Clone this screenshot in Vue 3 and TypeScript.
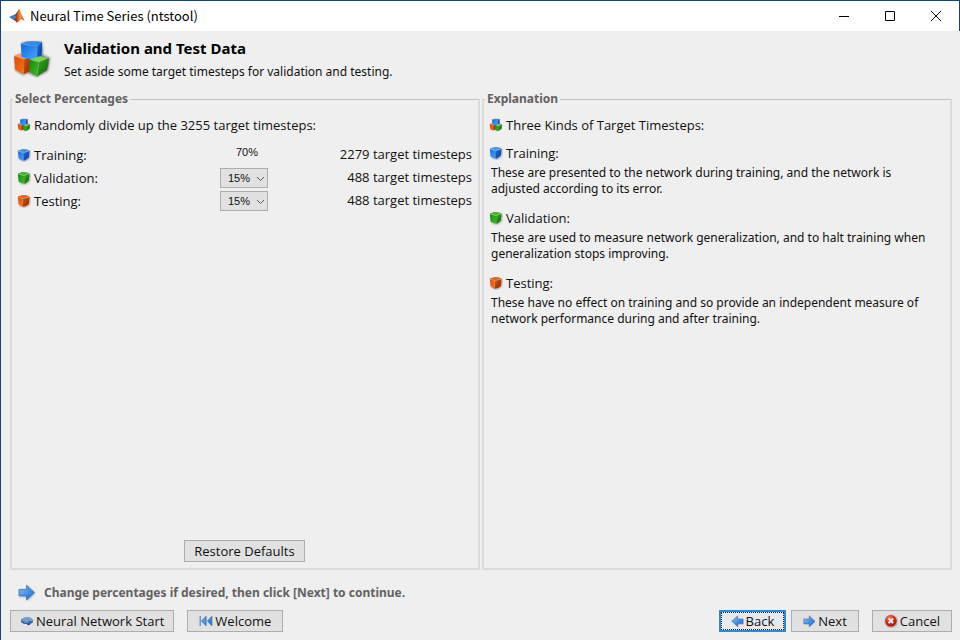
<script setup lang="ts">
import { computed, ref } from 'vue'

interface Subset {
  id: string
  name: string
  icon: string
  description: string
}

const total = 3255
const choices = [5, 10, 15, 20, 25, 30, 35]
const validation = ref(15)
const testing = ref(15)

const training = computed(() => 100 - validation.value - testing.value)
const validationSteps = computed(() => Math.round((total * validation.value) / 100))
const testingSteps = computed(() => Math.round((total * testing.value) / 100))
const trainingSteps = computed(() => total - validationSteps.value - testingSteps.value)

const subsets: Subset[] = [
  {
    id: 'training',
    name: 'Training:',
    icon: '#cube-blue',
    description:
      'These are presented to the network during training, and the network is adjusted according to its error.',
  },
  {
    id: 'validation',
    name: 'Validation:',
    icon: '#cube-green',
    description:
      'These are used to measure network generalization, and to halt training when generalization stops improving.',
  },
  {
    id: 'testing',
    name: 'Testing:',
    icon: '#cube-orange',
    description:
      'These have no effect on training and so provide an independent measure of network performance during and after training.',
  },
]

function restoreDefaults(): void {
  validation.value = 15
  testing.value = 15
}
</script>

<template>
  <div class="window">
    <svg class="sprites" aria-hidden="true">
      <defs>
        <linearGradient id="blue-top" x1="0" y1="0" x2="1" y2="1">
          <stop offset="0" stop-color="#4ba2f2" /><stop offset="1" stop-color="#1f74e0" />
        </linearGradient>
        <linearGradient id="blue-left" x1="0" y1="0" x2="1" y2="1">
          <stop offset="0" stop-color="#1268e0" /><stop offset="1" stop-color="#4aa6ff" />
        </linearGradient>
        <linearGradient id="blue-right" x1="0" y1="0" x2="1" y2="1">
          <stop offset="0" stop-color="#1a68da" /><stop offset="1" stop-color="#0c3f9e" />
        </linearGradient>
        <linearGradient id="green-left" x1="0" y1="0" x2="1" y2="1">
          <stop offset="0" stop-color="#0f8a0c" /><stop offset="1" stop-color="#45bb2c" />
        </linearGradient>
        <linearGradient id="green-right" x1="0" y1="0" x2="1" y2="1">
          <stop offset="0" stop-color="#38a822" /><stop offset="1" stop-color="#0c6406" />
        </linearGradient>
        <linearGradient id="orange-left" x1="0" y1="0" x2="1" y2="1">
          <stop offset="0" stop-color="#e04a00" /><stop offset="1" stop-color="#f57424" />
        </linearGradient>
        <linearGradient id="orange-right" x1="0" y1="0" x2="1" y2="1">
          <stop offset="0" stop-color="#d25008" /><stop offset="1" stop-color="#8e2e02" />
        </linearGradient>
        <linearGradient id="arrow-fill" x1="0" y1="0" x2="1" y2="1">
          <stop offset="0" stop-color="#8cc4fa" /><stop offset="0.5" stop-color="#4696ea" />
          <stop offset="1" stop-color="#1a62c4" />
        </linearGradient>
        <linearGradient id="brain-fill" x1="0" y1="0" x2="0" y2="1">
          <stop offset="0" stop-color="#8db9e6" /><stop offset="0.5" stop-color="#3f78b8" />
          <stop offset="1" stop-color="#1d3f70" />
        </linearGradient>
        <linearGradient id="flame" x1="0" y1="0" x2="1" y2="0">
          <stop offset="0" stop-color="#5a1c18" /><stop offset="0.4" stop-color="#d5521b" />
          <stop offset="0.6" stop-color="#f39a3c" /><stop offset="1" stop-color="#a8301a" />
        </linearGradient>
        <radialGradient id="red-ball" cx="0.4" cy="0.3" r="0.7">
          <stop offset="0" stop-color="#ff8a70" /><stop offset="0.5" stop-color="#e62c14" />
          <stop offset="1" stop-color="#a81404" />
        </radialGradient>
        <filter id="soft" x="-20%" y="-20%" width="140%" height="150%">
          <feGaussianBlur stdDeviation="0.8" />
        </filter>
      </defs>

      <symbol id="cube-blue" viewBox="0 0 14 14">
        <path d="M2 4 13.6 3.4 12.6 10.6 7.4 13.8 2 11Z" fill="#444" opacity=".5" filter="url(#soft)" />
        <path d="M.8 2.8Q3 4.4 6.6 4.6V12.8Q4 12.2 1.7 10.2Z" fill="url(#blue-left)" />
        <path d="M12.6 2.6Q10 4.4 6.6 4.6V12.8Q9.4 12 11.8 9.6Z" fill="url(#blue-right)" />
        <path d="M.8 2.8 4.4 1.2Q7 .8 9.6 1.2L12.6 2.6 6.6 4.8Z" fill="#3f96f4" />
        <path d="M1 2.9 6.6 4.8 12.4 2.7" stroke="#80c0fc" stroke-width=".5" fill="none" />
      </symbol>
      <symbol id="cube-green" viewBox="0 0 14 14">
        <path d="M2 4 13.6 3.4 12.6 10.6 7.4 13.8 2 11Z" fill="#444" opacity=".5" filter="url(#soft)" />
        <path d="M.8 2.8Q4 4.4 7.4 4.4V12.8Q4 12.4 1.7 10.4Z" fill="url(#green-left)" />
        <path d="M12.6 2.4Q10 4 7.4 4.4V12.8Q9.6 12 11.8 9.4Z" fill="url(#green-right)" />
        <path d="M.8 2.8 4.6 1Q7 .8 9.6 1.2L12.6 2.4 7.4 4.6Z" fill="#42b52c" />
        <path d="M1 2.9 7.4 4.6 12.4 2.5" stroke="#80dc64" stroke-width=".6" fill="none" />
      </symbol>
      <symbol id="cube-orange" viewBox="0 0 14 14">
        <path d="M2 4 13.6 3.4 12.6 10.6 7.4 13.8 2 11Z" fill="#444" opacity=".5" filter="url(#soft)" />
        <path d="M.8 2.6Q3 4.2 5.6 4.6V12.8Q3.6 12 1.7 10Z" fill="url(#orange-left)" />
        <path d="M12.6 2.8Q10 4.4 5.6 4.6V12.8Q9.4 12.4 11.8 10.2Z" fill="url(#orange-right)" />
        <path d="M.8 2.6 4.6 1.2Q7 .8 9.6 1.2L12.6 2.8 5.6 4.8Z" fill="#ea6218" />
        <path d="M1 2.7 5.6 4.8 12.4 2.9M5.6 5V11" stroke="#ff9c58" stroke-width=".5" fill="none" />
      </symbol>

      <symbol id="cubes" viewBox="0 0 40 40">
        <path
          d="M10 4 30 3 31 16 38 19 36 32 25 38 16 34 11 36 3 31 3 17 10 15Z"
          fill="#333" opacity=".6" filter="url(#soft)"
        />
        <path d="M2 17 8 14.5 18 17 12 20.6Z" fill="#ff9a54" />
        <path d="M2 17Q7 20 12.5 20.5L12 35Q7 33.6 3.2 30.6Z" fill="url(#orange-left)" />
        <path d="M12.5 20.5 19 17 18 32 12 35Z" fill="url(#orange-right)" />
        <path d="M8.8 4.4 14.5 2.2Q22 1.5 29.5 2.8L26.5 6Q17 7 8.8 4.4Z" fill="url(#blue-top)" />
        <path d="M8.8 4.4Q17 6.8 26 6L24.8 20.4Q16.5 20.5 9.6 18Z" fill="url(#blue-left)" />
        <path d="M26 6 29.8 2.8Q30.6 10 29.6 16.2L24.8 20.4Z" fill="url(#blue-right)" />
        <path d="M9 4.6Q17 7 26 6.2L29.4 3.2" stroke="#6cb4fa" stroke-width=".6" fill="none" />
        <path d="M17.6 20.6 27.5 17.2 37 19 26.5 23.4Z" fill="#74d84a" />
        <path d="M17.6 20.6Q22 23 26.8 23.4L25 37.4Q21 36 17.2 32Z" fill="url(#green-left)" />
        <path d="M26.8 23.4 37 19Q36.8 26 34.8 31L25 37.4Z" fill="url(#green-right)" />
        <path d="M26.8 23.6 25.2 36.6" stroke="#dfffc8" stroke-opacity=".35" stroke-width=".6" fill="none" />
      </symbol>

      <symbol id="arrow-right" viewBox="0 0 18 18">
        <path d="M1.5 6H9V2L17.2 9.4 9 17V13H1.5Z" fill="#444" opacity=".4" filter="url(#soft)" />
        <path
          d="M1 5.4H8.6V1.2L16.4 8.6 8.6 16V11.8H1Z"
          fill="url(#arrow-fill)" stroke="#2769b8" stroke-width=".7" stroke-linejoin="round"
        />
      </symbol>
      <symbol id="arrow-left" viewBox="0 0 18 18">
        <path d="M17.2 6H10V2L2 9.4 10 17V13H17.2Z" fill="#444" opacity=".4" filter="url(#soft)" />
        <path
          d="M16.6 5.4H9.2V1.2L1 8.6 9.2 16V11.8H16.6Z"
          fill="url(#arrow-fill)" stroke="#2769b8" stroke-width=".7" stroke-linejoin="round"
        />
      </symbol>
      <symbol id="brain" viewBox="0 0 14 14">
        <path
          d="M.8 7.4Q.6 4.8 3 4 5 2.4 7.4 2.8 10.4 2.6 11.8 4.6 13.6 6 12.8 8.2 12.2 9.6 10.6 9.6 10 11.4 8.4 11.2 7 11 6.6 9.8 3.4 10.2 2.6 9 1 8.8.8 7.4Z"
          fill="url(#brain-fill)"
        />
        <path d="M2.6 6.6Q4.4 5 6 6.4T9.4 6.2 11.6 7M4 8.2Q6 7.4 8.2 8.6" stroke="#a9cdf0" stroke-width=".7" fill="none" />
      </symbol>
      <symbol id="rewind" viewBox="0 0 14 14">
        <path
          d="M1.2 2V12M7 2.4 2.6 7 7 11.6ZM12.8 2.4 8.6 7 12.8 11.6Z"
          fill="url(#arrow-fill)" stroke="#3272b8" stroke-width="1"
        />
      </symbol>
      <symbol id="stop" viewBox="0 0 14 14">
        <circle cx="7.4" cy="7.6" r="6" fill="#444" opacity=".5" filter="url(#soft)" />
        <circle cx="6.8" cy="6.8" r="5.8" fill="url(#red-ball)" />
        <path d="M4.6 4.6 9.1 9.1M9.1 4.6 4.6 9.1" stroke="#fff" stroke-width="2" />
      </symbol>
      <symbol id="logo" viewBox="0 0 16 16">
        <path d="M0 9 5 6.8 7.4 9 4.4 12Z" fill="#3f7fb5" />
        <path d="M5 6.8Q7.4 6 8.6 3.2L9.4 4 7.4 9Z" fill="#2b4f78" />
        <path d="M10.4 .8Q8.4 2 7.4 7.4 6.6 9.8 4.4 12 6 11.6 7.8 14.8 10.4 13.4 11.6 11.4 13.4 10.6 15.6 13 13 8.6 10.4.8Z" fill="url(#flame)" />
      </symbol>
    </svg>

    <header class="titlebar">
      <svg class="logo" aria-hidden="true"><use href="#logo" /></svg>
      <span class="caption">Neural Time Series (ntstool)</span>
      <div class="window-controls">
        <button type="button" aria-label="Minimize">
          <svg viewBox="0 0 12 12"><path d="M1 6.5H11" /></svg>
        </button>
        <button type="button" aria-label="Maximize">
          <svg viewBox="0 0 12 12"><path d="M1.5 1.5H10.5V10.5H1.5Z" /></svg>
        </button>
        <button type="button" aria-label="Close">
          <svg viewBox="0 0 12 12"><path d="M1 1 11 11M11 1 1 11" /></svg>
        </button>
      </div>
    </header>

    <div class="intro">
      <svg class="intro-icon" aria-hidden="true"><use href="#cubes" /></svg>
      <div>
        <h1>Validation and Test Data</h1>
        <p>Set aside some target timesteps for validation and testing.</p>
      </div>
    </div>

    <main class="panels">
      <fieldset class="panel">
        <legend>Select Percentages</legend>
        <div class="panel-body">
          <p class="item">
            <svg class="icon" aria-hidden="true"><use href="#cubes" /></svg>Randomly divide up the {{ total }} target timesteps:
          </p>
          <div class="split">
            <span class="item"><svg class="icon" aria-hidden="true"><use href="#cube-blue" /></svg>Training:</span>
            <span class="percent">{{ training }}%</span>
            <span class="count">{{ trainingSteps }} target timesteps</span>

            <label class="item" for="validation">
              <svg class="icon" aria-hidden="true"><use href="#cube-green" /></svg>Validation:
            </label>
            <span class="drop">
              <select id="validation" v-model.number="validation">
                <option v-for="c in choices" :key="c" :value="c">{{ c }}%</option>
              </select>
              <svg class="chevron" viewBox="0 0 9 6" aria-hidden="true"><path d="M1 1 4.5 4.5 8 1" /></svg>
            </span>
            <span class="count">{{ validationSteps }} target timesteps</span>

            <label class="item" for="testing">
              <svg class="icon" aria-hidden="true"><use href="#cube-orange" /></svg>Testing:
            </label>
            <span class="drop">
              <select id="testing" v-model.number="testing">
                <option v-for="c in choices" :key="c" :value="c">{{ c }}%</option>
              </select>
              <svg class="chevron" viewBox="0 0 9 6" aria-hidden="true"><path d="M1 1 4.5 4.5 8 1" /></svg>
            </span>
            <span class="count">{{ testingSteps }} target timesteps</span>
          </div>
          <button type="button" class="btn restore" @click="restoreDefaults">Restore Defaults</button>
        </div>
      </fieldset>

      <fieldset class="panel">
        <legend>Explanation</legend>
        <div class="panel-body">
          <p class="item">
            <svg class="icon" aria-hidden="true"><use href="#cubes" /></svg>Three Kinds of Target Timesteps:
          </p>
          <dl>
            <div v-for="s in subsets" :key="s.id" class="kind">
              <dt class="item"><svg class="icon" aria-hidden="true"><use :href="s.icon" /></svg>{{ s.name }}</dt>
              <dd>{{ s.description }}</dd>
            </div>
          </dl>
        </div>
      </fieldset>
    </main>

    <p class="hint">
      <svg class="hint-icon" aria-hidden="true"><use href="#arrow-right" /></svg>
      Change percentages if desired, then click [Next] to continue.
    </p>

    <footer class="actions">
      <button type="button" class="btn"><svg class="icon" aria-hidden="true"><use href="#brain" /></svg>Neural Network Start</button>
      <button type="button" class="btn welcome"><svg class="icon" aria-hidden="true"><use href="#rewind" /></svg>Welcome</button>
      <button type="button" class="btn back"><svg class="icon arrow" aria-hidden="true"><use href="#arrow-left" /></svg>Back</button>
      <button type="button" class="btn next"><svg class="icon arrow" aria-hidden="true"><use href="#arrow-right" /></svg>Next</button>
      <button type="button" class="btn cancel"><svg class="icon" aria-hidden="true"><use href="#stop" /></svg>Cancel</button>
    </footer>
  </div>
</template>

<style>
body {
  margin: 0;
  background: #efefef;
}
</style>

<style scoped>
.window {
  box-sizing: border-box;
  display: flex;
  flex-direction: column;
  min-height: 100vh;
  border-top: 1px solid #16436f;
  border-left: 1px solid #16436f;
  background: #efefef;
  color: #111;
  font: 13px/16px 'Open Sans', 'Noto Sans', sans-serif;
}
.sprites {
  position: absolute;
  width: 0;
  height: 0;
}
.titlebar {
  display: flex;
  align-items: center;
  height: 30px;
  padding-left: 8px;
  background: #fff;
  border-right: 1px solid #16436f;
  color: #000;
  font-family: 'Noto Sans CJK SC', 'Noto Sans', sans-serif;
}
.logo {
  width: 16px;
  height: 16px;
  margin-right: 5px;
}
.window-controls {
  display: flex;
  margin-left: auto;
}
.window-controls button {
  display: grid;
  place-items: center;
  width: 46px;
  height: 30px;
  padding: 0;
  border: 0;
  background: none;
}
.window-controls svg {
  width: 12px;
  height: 12px;
  fill: none;
  stroke: #000;
}
.intro {
  display: flex;
  align-items: center;
  gap: 12px;
  padding: 7px 11px 4px;
  font-family: 'Noto Sans', 'Open Sans', sans-serif;
}
.intro-icon {
  width: 40px;
  height: 40px;
}
h1 {
  margin: 0 0 5px;
  color: #000;
  font-size: 15px;
  line-height: 21px;
}
.intro p {
  margin: 0;
  font-size: 12px;
}
.panels {
  display: grid;
  grid-template-columns: 1fr 1fr;
  flex: 1;
  gap: 2px;
  padding: 7px 8px 0 9px;
}
.panel {
  display: flex;
  flex-direction: column;
  min-width: 0;
  margin: 0;
  padding: 0;
  border: 2px solid #dcdcdc;
  border-top: 1px solid #c2c2c2;
}
legend {
  margin-left: 1px;
  padding: 0 2px;
  color: #626262;
  font: 700 12px/16px 'Noto Sans', 'Open Sans', sans-serif;
}
.panel-body {
  display: flex;
  flex-direction: column;
  flex: 1;
  height: 100%;
  box-sizing: border-box;
  padding: 10px 6px 6px 5px;
}
.item {
  display: flex;
  align-items: center;
  gap: 3px;
  margin: 0;
}
.icon {
  flex: none;
  width: 14px;
  height: 14px;
}
.icon.arrow {
  width: 13px;
  height: 13px;
}
.split {
  display: grid;
  grid-template-columns: 203px 50px 1fr;
  grid-auto-rows: 23px;
  align-items: center;
  margin-top: 10px;
}
.percent {
  padding-left: 16px;
  padding-bottom: 6px;
  font: 11px/14px 'Liberation Sans', Arial, sans-serif;
}
.count {
  padding-bottom: 2px;
  text-align: right;
}
.drop {
  position: relative;
  display: block;
  width: 48px;
  height: 20px;
}
select {
  appearance: none;
  display: block;
  box-sizing: border-box;
  width: 100%;
  height: 100%;
  padding: 0 0 0 7px;
  border: 1px solid #adadad;
  border-radius: 0;
  background: #e1e1e1;
  color: #111;
  font: 11px/14px 'Liberation Sans', Arial, sans-serif;
}
.chevron {
  position: absolute;
  top: 8px;
  right: 3px;
  width: 9px;
  height: 6px;
  fill: none;
  stroke: #555;
  pointer-events: none;
}
.btn {
  display: flex;
  align-items: center;
  justify-content: center;
  gap: 2px;
  box-sizing: border-box;
  height: 22px;
  padding: 0 9px;
  border: 1px solid #adadad;
  border-radius: 0;
  background: #e1e1e1;
  color: #111;
  font: inherit;
  white-space: nowrap;
}
.restore {
  align-self: center;
  margin-top: auto;
}
dl {
  margin: 12px 0 0;
}
.kind {
  margin-bottom: 13px;
}
dt {
  line-height: 16px;
}
dd {
  margin: 4px 8px 0 2px;
  font-family: 'Noto Sans', 'Open Sans', sans-serif;
  font-size: 12px;
}
.hint {
  display: flex;
  align-items: center;
  gap: 8px;
  margin: 14px 0 8px;
  padding-left: 17px;
  color: #626262;
  font: 700 12px/16px 'Noto Sans', 'Open Sans', sans-serif;
}
.hint-icon {
  width: 18px;
  height: 18px;
}
.actions {
  display: flex;
  padding: 0 8px 8px 9px;
}
.welcome,
.next,
.cancel {
  padding: 0 11px;
}
.welcome,
.cancel {
  margin-left: 13px;
}
.next {
  margin-left: 5px;
}
.back {
  margin-left: auto;
  padding: 0 10px;
  border: 2px solid #2a8ad8;
  outline: 1px dotted #222;
  outline-offset: -3px;
  background: #e3eaf0;
}
</style>
